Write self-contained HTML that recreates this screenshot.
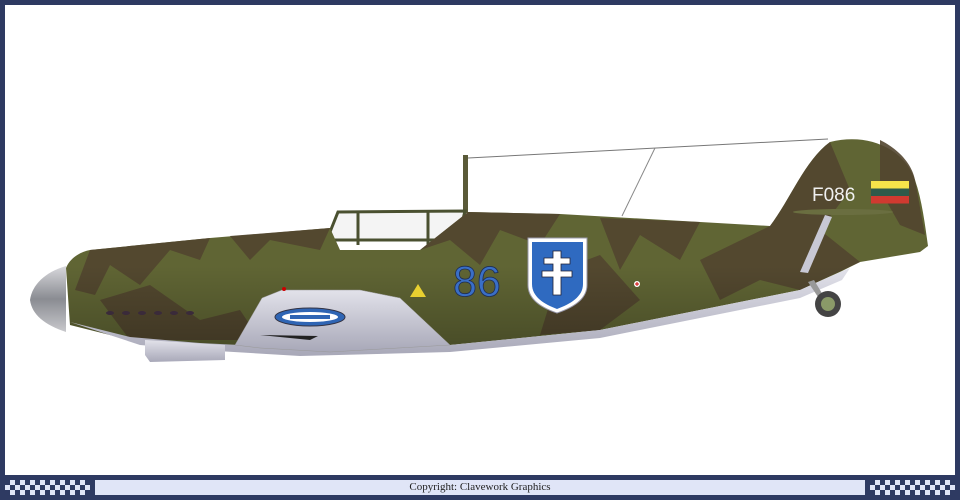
<!DOCTYPE html>
<html><head><meta charset="utf-8"><style>
html,body{margin:0;padding:0;}
body{width:960px;height:500px;position:relative;background:#2e3a62;overflow:hidden;font-family:"Liberation Serif",serif;}
#w{position:absolute;left:5px;top:5px;width:950px;height:470px;background:#fff;}
#chk1,#chk2{position:absolute;top:480px;height:15px;width:85px;
background:repeating-conic-gradient(#e0e5f7 0 25%,#2e3a62 0 50%) 0 0/10px 10px;}
#chk1{left:5px}#chk2{left:870px}
#bar{position:absolute;left:95px;top:480px;width:770px;height:15px;background:#e0e5f7;font-size:11px;line-height:15px;text-align:center;color:#222;}
svg{position:absolute;left:0;top:0}
</style></head><body>
<div id="w"></div>
<div id="chk1"></div><div id="chk2"></div>
<div id="bar">Copyright: Clavework Graphics</div>
<svg width="960" height="500" viewBox="0 0 960 500">
<defs>
<linearGradient id="sp" x1="0" y1="0" x2="0" y2="1"><stop offset="0" stop-color="#d8d8dc"/><stop offset=".5" stop-color="#8a8c92"/><stop offset="1" stop-color="#c8c8cc"/></linearGradient>
<linearGradient id="gr" x1="0" y1="0" x2="0" y2="1"><stop offset="0" stop-color="#e2e2ea"/><stop offset="1" stop-color="#a8a8b8"/></linearGradient>
<linearGradient id="sh" x1="0" y1="0" x2="0" y2="1"><stop offset="0" stop-color="#000" stop-opacity="0"/><stop offset=".6" stop-color="#000" stop-opacity="0"/><stop offset="1" stop-color="#000" stop-opacity=".25"/></linearGradient>
</defs>
<line x1="468" y1="158" x2="828" y2="139" stroke="#777" stroke-width="1"/>
<line x1="655" y1="148" x2="622" y2="216" stroke="#888" stroke-width="1"/>
<rect x="463" y="155" width="5" height="58" fill="#5a5a38"/>
<path d="M330,232 L338,212 L465,211 L458,240 L330,240Z" fill="#f4f4f4" stroke="#4a5030" stroke-width="3"/>
<line x1="358" y1="212" x2="358" y2="245" stroke="#4a5030" stroke-width="3"/>
<line x1="428" y1="212" x2="428" y2="245" stroke="#4a5030" stroke-width="3"/>
<path d="M66,268 C70,258 80,252 90,250 L210,238 L330,228 L340,250 L420,250 L468,212 L560,214 L770,226 C790,200 805,160 830,142 C870,132 905,150 915,180 C922,200 925,225 928,246 L920,252 L860,262 L840,272 L800,290 L600,330 L450,345 L300,350 L200,345 L130,340 L70,325Z" fill="#606534"/>
<g fill="#52452f" opacity=".9">
<path d="M90,250 L210,238 L200,260 L170,250 L140,285 L110,265 L95,295 L75,290Z"/>
<path d="M230,236 L330,228 L320,250 L270,240 L250,260Z"/>
<path d="M420,250 L468,212 L560,214 L540,245 L500,230 L480,265 L450,240 Z"/>
<path d="M600,218 L700,222 L680,260 L640,235 L620,270Z"/>
<path d="M770,226 C790,200 805,160 830,142 L850,190 L820,230 L860,262 L800,290 L760,280 L720,300 L700,260Z"/>
<path d="M880,140 C900,150 912,165 915,180 L925,235 L900,225 L880,190Z"/>
<path d="M100,300 L150,285 L200,320 L240,310 L260,340 L130,340Z"/>
<path d="M560,270 L600,255 L640,300 L600,330 L540,335Z"/>
</g>
<path d="M66,268 C70,258 80,252 90,250 L210,238 L330,228 L340,250 L420,250 L468,212 L560,214 L770,226 C790,200 805,160 830,142 C870,132 905,150 915,180 C922,200 925,225 928,246 L920,252 L860,262 L840,272 L800,290 L600,330 L450,345 L300,350 L200,345 L130,340 L70,325Z" fill="url(#sh)"/>
<path d="M70,322 L130,337 L200,343 L300,348 L450,345 L600,330 L800,290 L840,272 L850,268 L842,280 L800,298 L600,338 L450,352 L300,356 L200,350 L140,345Z" fill="url(#gr)"/>
<path d="M145,340 L225,345 L225,360 L150,362 L145,355Z" fill="url(#gr)"/>
<g fill="#3a2a3a"><ellipse cx="110" cy="313" rx="4" ry="2"/><ellipse cx="126" cy="313" rx="4" ry="2"/><ellipse cx="142" cy="313" rx="4" ry="2"/><ellipse cx="158" cy="313" rx="4" ry="2"/><ellipse cx="174" cy="313" rx="4" ry="2"/><ellipse cx="190" cy="313" rx="4" ry="2"/></g>
<path d="M66,266 C45,272 32,285 30,300 C32,315 45,325 66,332Z" fill="url(#sp)"/>
<path d="M235,345 L262,298 L282,290 L360,290 L400,298 L450,345 L330,352 L260,348Z" fill="url(#gr)" stroke="#999" stroke-width=".5"/>
<ellipse cx="310" cy="317" rx="35" ry="9" fill="#2f65b4" stroke="#334" stroke-width="1"/>
<ellipse cx="310" cy="317" rx="28" ry="5" fill="#fff"/>
<rect x="290" y="315" width="40" height="4" fill="#2f65b4"/>
<path d="M260,335 L310,340 L318,336Z" fill="#222"/>
<circle cx="284" cy="289" r="2" fill="#c00"/>
<ellipse cx="843" cy="212" rx="50" ry="3" fill="#6a6e40"/>
<path d="M825,215 L832,217 L808,273 L800,272Z" fill="#c8c8d4"/>
<path d="M808,282 L820,300 L826,300 L814,280Z" fill="#999"/>
<circle cx="828" cy="304" r="13" fill="#444"/>
<circle cx="828" cy="304" r="7" fill="#8a9a68"/>
<text x="453" y="296" font-family="Liberation Sans,sans-serif" font-size="43" fill="#3a6fc6" stroke="#1c2c55" stroke-width=".8">86</text>
<path d="M528,238 L587,238 L587,285 C587,300 572,308 557,313 C542,308 528,300 528,285Z" fill="#fff" stroke="#99a" stroke-width="1"/>
<path d="M532,242 L583,242 L583,284 C583,297 570,304 557,309 C544,304 532,297 532,284Z" fill="#2f6ac0"/>
<path d="M553,251 h8 v7 h9 v6 h-9 v7 h11 v6 h-11 v18 h-8 v-18 h-11 v-6 h11 v-7 h-9 v-6 h9z" fill="#fff" stroke="#223" stroke-width=".8"/>
<path d="M410,297 L418,284 L426,297Z" fill="#e8d030"/>
<circle cx="637" cy="284" r="3" fill="#fff"/><path d="M635,284h4M637,282v4" stroke="#c00" stroke-width="1"/>
<text x="812" y="201" font-family="Liberation Sans,sans-serif" font-size="19" fill="#f0f0f0">F086</text>
<rect x="871" y="181" width="38" height="7.5" fill="#f6e44a"/>
<rect x="871" y="188.5" width="38" height="7.5" fill="#2f5a4a"/>
<rect x="871" y="196" width="38" height="7.5" fill="#d03a30"/>
</svg>
</body></html>
